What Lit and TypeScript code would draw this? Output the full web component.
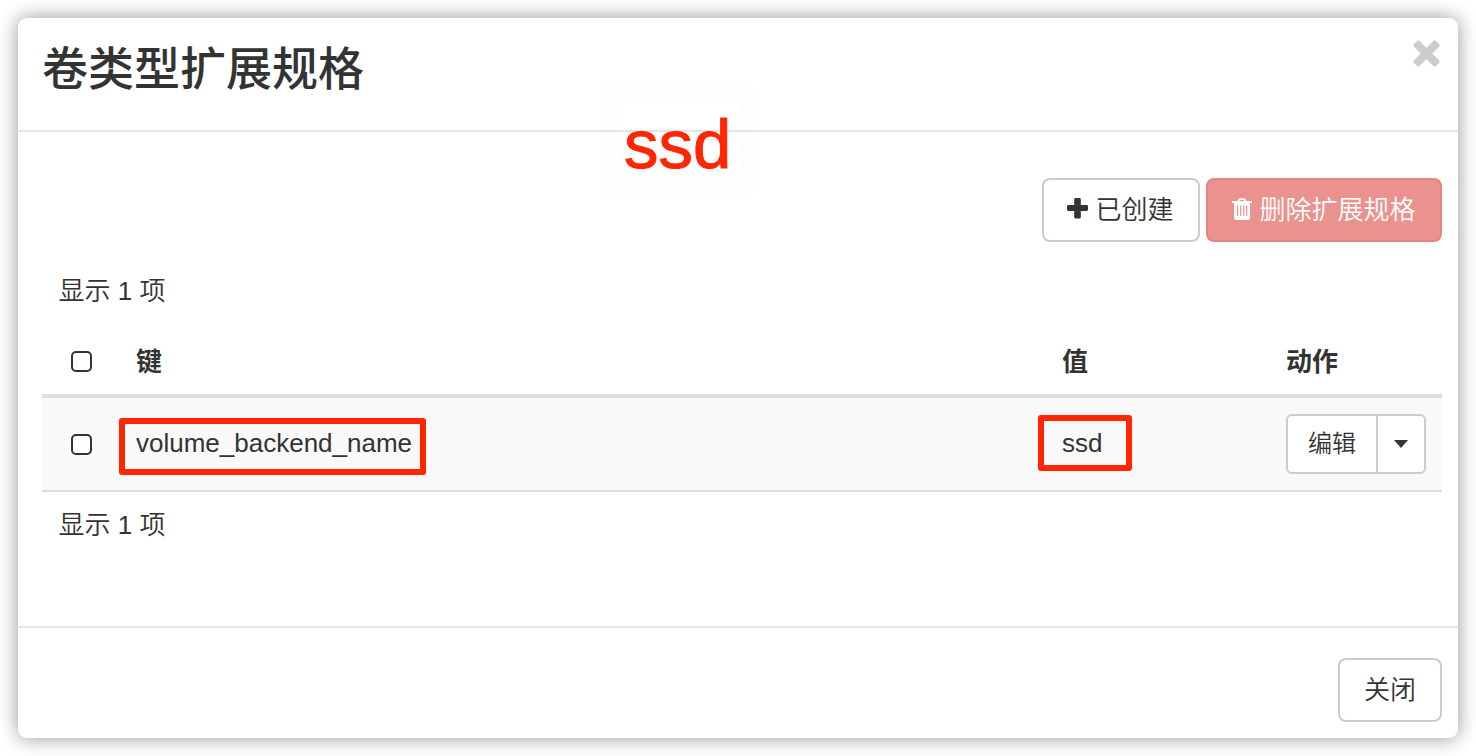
import { LitElement, html, css, svg } from "lit";
import { customElement } from "lit/decorators.js";

const plusIcon = svg`<path d="M7.2 1.4Q7.2 0 8.6 0H12.4Q13.8 0 13.8 1.4V7H19.6Q21 7 21 8.4V11.6Q21 13 19.6 13H13.8V19.2Q13.8 20.6 12.4 20.6H8.6Q7.2 20.6 7.2 19.2V13H1.4Q0 13 0 11.6V8.4Q0 7 1.4 7H7.2Z"/>`;

const trashIcon = svg`<path fill-rule="evenodd" d="M5.6 3L6.6 1.2Q7.1 .3 8 .3H12Q12.9 .3 13.4 1.2L14.4 3H19.4Q20 3 20 3.6V4.4Q20 5 19.4 5H18V19.2Q18 22 15.4 22H4.8Q2 22 2 19.2V5H.6Q0 5 0 4.4V3.6Q0 3 .6 3ZM7.7 3H12.3L11.8 2.1Q11.7 1.9 11.4 1.9H8.6Q8.3 1.9 8.2 2.1ZM5 7.6V17.8H6.2V7.6ZM8.1 7.6V17.8H9.3V7.6ZM11.2 7.6V17.8H12.4V7.6ZM14.1 7.6V17.8H15.3V7.6Z"/>`;

@customElement("app-root")
export class AppRoot extends LitElement {
  static styles = css`
    :host {
      display: block;
      box-sizing: border-box;
      height: 756px;
      padding: 18px;
      background: #fff;
      overflow: hidden;
      color: #333;
      font: 26px/36px "Liberation Sans", "Noto Sans CJK SC", sans-serif;
    }
    * { box-sizing: border-box; }
    .modal {
      position: relative;
      display: flex;
      flex-direction: column;
      width: 1440px;
      height: 720px;
      background: #fff;
      border-radius: 9px;
      box-shadow: 0 0 20px rgba(0, 0, 0, 0.42);
    }
    .header {
      display: flex;
      justify-content: space-between;
      height: 114px;
      padding: 22px 18px 0 24px;
      border-bottom: 2px solid #e5e5e5;
    }
    .title {
      margin: 0;
      font-size: 46px;
      line-height: 58px;
      font-weight: 500;
    }
    .dismiss {
      width: 27px;
      height: 27px;
      fill: #ccc;
    }
    .body {
      flex: 1;
      display: flex;
      flex-direction: column;
      padding: 46px 16px 0 24px;
    }
    .toolbar {
      display: flex;
      justify-content: flex-end;
      gap: 6px;
    }
    .btn {
      display: flex;
      align-items: center;
      justify-content: center;
      height: 64px;
      padding: 0;
      border: 2px solid #ccc;
      border-radius: 8px;
      background: #fff;
      color: #333;
      font: inherit;
      font-weight: 350;
      white-space: nowrap;
    }
    .create { width: 158px; gap: 7px; padding-right: 1px; }
    .delete {
      width: 236px;
      gap: 7px;
      color: #fff;
      background: #ea928e;
      border-color: #e68580;
    }
    .icon { fill: currentColor; flex: none; }
    .create .icon { margin-bottom: 3px; }
    .delete .icon { margin-bottom: 2px; }
    .count {
      height: 36px;
      padding-left: 16.5px;
      font-weight: 350;
    }
    .count.top { margin-top: 31px; }
    .count.bottom { margin-top: 15px; }
    .row {
      display: grid;
      grid-template-columns: 94px 926px 224px 1fr;
      align-items: center;
    }
    .row.head {
      height: 89px;
      padding-top: 32px;
      font-weight: 700;
      border-bottom: 4px solid #ddd;
      align-items: start;
    }
    .row.head .col { padding-top: 3px; }
    .row.item {
      height: 94px;
      background: #f9f9f9;
      border-bottom: 2px solid #ddd;
    }
    .check {
      display: block;
      width: 21px;
      height: 21px;
      margin-left: 28.5px;
      border: 2px solid #333;
      border-radius: 5px;
      background: #fff;
    }
    .head .check { margin-top: 10px; }
    .cell { position: relative; padding-bottom: 2px; }
    .mark {
      position: absolute;
      border: 6px solid #ff2600;
      border-radius: 3px;
      box-shadow: 0 0 3px rgba(0, 0, 0, 0.04);
    }
    .mark.key { left: -17px; top: -7px; width: 307px; height: 57px; }
    .mark.value { left: -24px; top: -10px; width: 94px; height: 56px; }
    .group { display: flex; }
    .edit {
      width: 92px;
      height: 60px;
      font-size: 24px;
      border-radius: 6px 0 0 6px;
    }
    .more {
      width: 50px;
      height: 60px;
      margin-left: -2px;
      border-radius: 0 6px 6px 0;
    }
    .footer {
      display: flex;
      justify-content: flex-end;
      height: 112px;
      padding: 30px 16px 0 0;
      border-top: 2px solid #e5e5e5;
    }
    .close { width: 104px; }
    .note {
      position: absolute;
      left: 584px;
      top: 66px;
      width: 152px;
      height: 112px;
      border: 15px solid rgba(0, 0, 0, 0.008);
      border-radius: 8px;
    }
    .note-text {
      position: absolute;
      left: 7px;
      top: 6px;
      font-size: 69px;
      line-height: 80px;
      color: #ff2600;
      -webkit-text-stroke: 1px #ff2600;
    }
  `;

  render() {
    return html`
      <div class="modal">
        <div class="header">
          <h3 class="title">卷类型扩展规格</h3>
          <svg class="dismiss" viewBox="0 0 27 27">
            <g transform="rotate(45 13.5 13.5)">
              <rect x="-2" y="9.5" width="31" height="8" rx="1.8" />
              <rect x="9.5" y="-2" width="8" height="31" rx="1.8" />
            </g>
          </svg>
        </div>
        <div class="body">
          <div class="toolbar">
            <button class="btn create">
              <svg class="icon" width="21" height="21" viewBox="0 0 21 21">${plusIcon}</svg>已创建
            </button>
            <button class="btn delete">
              <svg class="icon" width="20" height="22" viewBox="0 0 20 22">${trashIcon}</svg>删除扩展规格
            </button>
          </div>
          <div class="count top">显示 1 项</div>
          <div class="row head">
            <span class="check"></span>
            <span class="col">键</span>
            <span class="col">值</span>
            <span class="col">动作</span>
          </div>
          <div class="row item">
            <span class="check"></span>
            <div class="cell">volume_backend_name<span class="mark key"></span></div>
            <div class="cell">ssd<span class="mark value"></span></div>
            <div class="group">
              <button class="btn edit">编辑</button>
              <button class="btn more">
                <svg class="icon" width="14" height="8" viewBox="0 0 14 8"><path d="M0 0H14L7 8Z" /></svg>
              </button>
            </div>
          </div>
          <div class="count bottom">显示 1 项</div>
        </div>
        <div class="footer"><button class="btn close">关闭</button></div>
        <div class="note"><span class="note-text">ssd</span></div>
      </div>
    `;
  }
}
